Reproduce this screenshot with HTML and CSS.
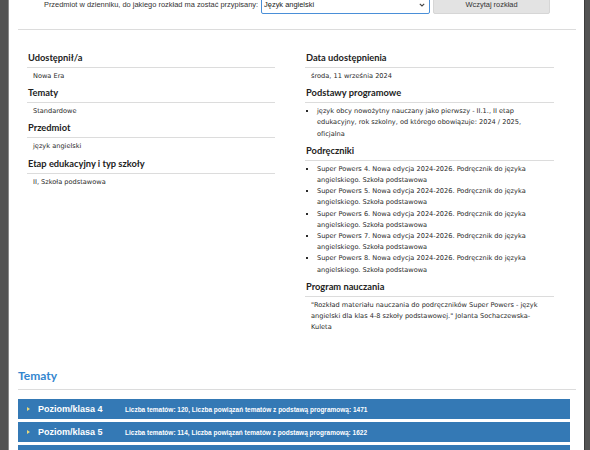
FILE: index.html
```html
<!DOCTYPE html>
<html lang="pl">
<head>
    <meta charset="UTF-8">
    <meta name="viewport" content="width=device-width, initial-scale=1.0">
    <title>Rozkład materiału</title>
    <link rel="stylesheet" href="styles.css">
</head>
<body>
    <div class="modal">
        <form class="load-row">
            <label for="subject">Przedmiot w dzienniku, do jakiego rozkład ma zostać przypisany:</label>
            <span class="select-wrap">
                <select id="subject" name="subject">
                    <option>Język angielski</option>
                </select>
                <svg class="chevron" width="6" height="4" viewBox="0 0 6 4"><path d="M0.8 0.8 L3 3 L5.2 0.8" fill="none" stroke="#444" stroke-width="1.1"/></svg>
            </span>
            <button type="button">Wczytaj rozkład</button>
        </form>

        <hr class="divider">

        <div class="details">
            <div class="col">
                <h3>Udostępnił/a</h3>
                <p class="value">Nowa Era</p>
                <h3>Tematy</h3>
                <p class="value">Standardowe</p>
                <h3>Przedmiot</h3>
                <p class="value">język angielski</p>
                <h3>Etap edukacyjny i typ szkoły</h3>
                <p class="value">II, Szkoła podstawowa</p>
            </div>
            <div class="col">
                <h3>Data udostępnienia</h3>
                <p class="value">środa, 11 września 2024</p>
                <h3>Podstawy programowe</h3>
                <ul class="value-list">
                    <li>język obcy nowożytny nauczany jako pierwszy - II.1., II etap edukacyjny, rok szkolny, od którego obowiązuje: 2024 / 2025, oficjalna</li>
                </ul>
                <h3>Podręczniki</h3>
                <ul class="value-list">
                    <li>Super Powers 4. Nowa edycja 2024-2026. Podręcznik do języka angielskiego. Szkoła podstawowa</li>
                    <li>Super Powers 5. Nowa edycja 2024-2026. Podręcznik do języka angielskiego. Szkoła podstawowa</li>
                    <li>Super Powers 6. Nowa edycja 2024-2026. Podręcznik do języka angielskiego. Szkoła podstawowa</li>
                    <li>Super Powers 7. Nowa edycja 2024-2026. Podręcznik do języka angielskiego. Szkoła podstawowa</li>
                    <li>Super Powers 8. Nowa edycja 2024-2026. Podręcznik do języka angielskiego. Szkoła podstawowa</li>
                </ul>
                <h3>Program nauczania</h3>
                <p class="value">"Rozkład materiału nauczania do podręczników Super Powers - język angielski dla klas 4-8 szkoły podstawowej." Jolanta Sochaczewska-Kuleta</p>
            </div>
        </div>

        <h2 class="topics-title">Tematy</h2>

        <div class="level">
            <span class="arrow"></span>
            <span class="level-name">Poziom/klasa 4</span>
            <span class="level-info">Liczba tematów: 120, Liczba powiązań tematów z podstawą programową: 1471</span>
        </div>
        <div class="level">
            <span class="arrow"></span>
            <span class="level-name">Poziom/klasa 5</span>
            <span class="level-info">Liczba tematów: 114, Liczba powiązań tematów z podstawą programową: 1622</span>
        </div>
        <div class="level"></div>
    </div>
</body>
</html>
```

FILE: styles.css
```css
html, body {
    height: 100%;
    overflow: hidden;
}
body {
    margin: 0;
    background-color: #535353;
    font-family: "DejaVu Sans", sans-serif;
    color: #333;
}
.modal {
    margin: 0 5px 0 8px;
    min-height: 100%;
    padding: 0 8px 0 9px;
    background: white;
    border-left: 1px solid #8a8a8a;
    border-right: 1px solid #3c3c3c;
}
.load-row {
    display: flex;
    justify-content: center;
    align-items: center;
    gap: 3px;
    margin: -6px 0 0;
    font-family: "Liberation Sans", Arial, sans-serif;
    font-size: 7.45px;
}
.load-row label {
    color: #333;
}
.select-wrap {
    position: relative;
    display: flex;
}
.load-row select {
    width: 169px;
    height: 20px;
    padding: 0 2px;
    border: 1px solid #4a8fd8;
    border-radius: 2px;
    background: white;
    appearance: none;
    font-family: "Liberation Sans", Arial, sans-serif;
    font-size: 7.45px;
    color: #222;
}
.chevron {
    position: absolute;
    right: 5px;
    top: 9px;
}
.load-row button {
    width: 117px;
    height: 20px;
    border: 1px solid #d6d6d6;
    border-radius: 2px;
    background-color: #e3e3e3;
    font-family: "Liberation Sans", Arial, sans-serif;
    font-size: 7.45px;
    color: #333;
}
.divider {
    margin: 15px 0 0;
    border: none;
    border-top: 1px solid #dcdcdc;
}
.details {
    display: grid;
    grid-template-columns: 248px 249px;
    gap: 30px;
    margin: 22px 0 0 9px;
}
.col h3 {
    margin: 0;
    padding: 0 0 3px 1px;
    font-family: Lato, sans-serif;
    font-weight: bold;
    font-size: 9.3px;
    line-height: 12px;
    color: #222;
    border-bottom: 1px solid #dcdcdc;
}
.value {
    margin: 0;
    padding: 3px 6px 5px;
    font-size: 6.6px;
    line-height: 11.2px;
    color: #2b2b2b;
}
.value-list {
    margin: 0;
    padding: 3px 8px 5px 12px;
    font-size: 6.6px;
    line-height: 11.2px;
    color: #2b2b2b;
    list-style: square;
}
.topics-title {
    margin: 30px 0 0;
    padding-bottom: 6px;
    font-family: Lato, sans-serif;
    font-weight: bold;
    font-size: 12px;
    line-height: 15px;
    color: #3386cf;
    border-bottom: 1px solid #dcdcdc;
}
.level {
    display: flex;
    align-items: center;
    height: 20px;
    margin: 9px 6px 0 0;
    background-color: #3479b5;
    color: white;
    font-family: "Liberation Sans", Arial, sans-serif;
    font-weight: bold;
}
.level + .level {
    margin-top: 3px;
}
.arrow {
    width: 0;
    height: 0;
    margin-left: 9px;
    border-left: 3px solid #e9d97c;
    border-top: 2.5px solid transparent;
    border-bottom: 2.5px solid transparent;
}
.level-name {
    width: 87px;
    margin-left: 8px;
    font-size: 9px;
}
.level-info {
    font-size: 6.5px;
}
```
